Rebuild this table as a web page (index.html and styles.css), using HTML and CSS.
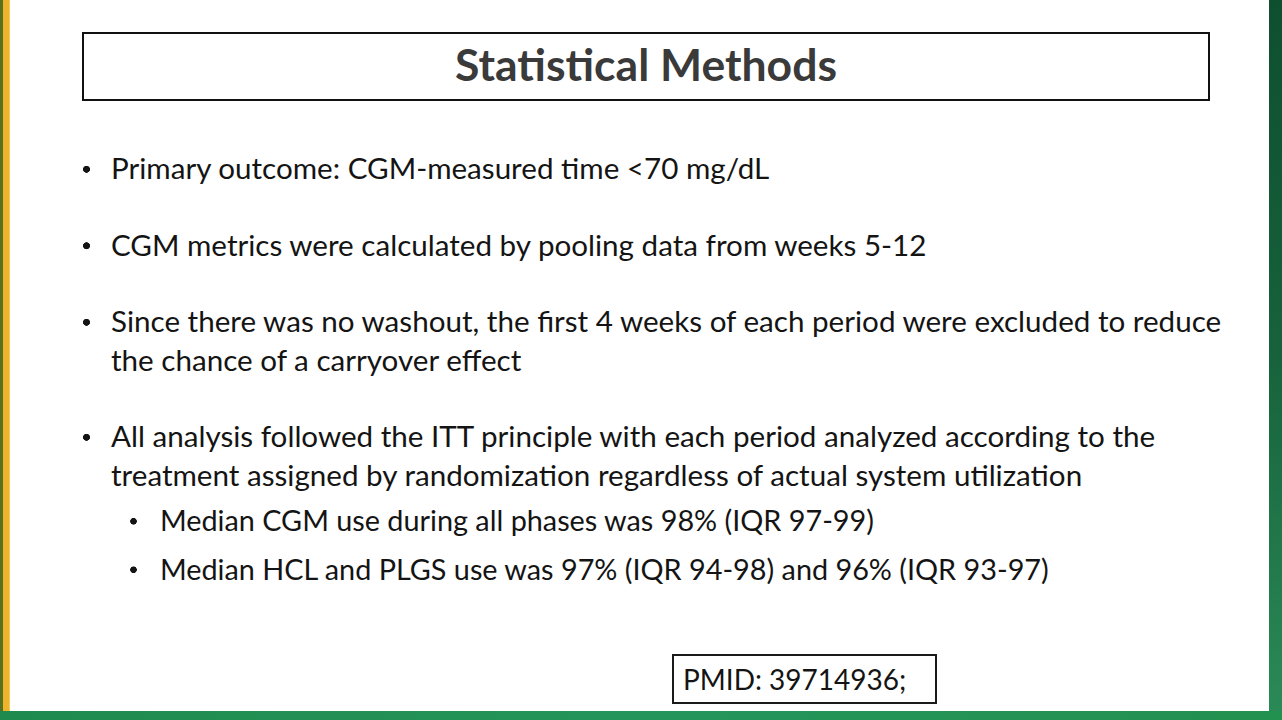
FILE: index.html
```html
<!DOCTYPE html>
<html lang="en">
<head>
<meta charset="utf-8">
<title>Statistical Methods</title>
<link rel="stylesheet" href="styles.css">
</head>
<body>
<div class="slide">
  <div class="stripe-left"></div>
  <main class="content">
    <header class="title-box"><h1 class="title">Statistical Methods</h1></header>
    <ul class="points">
      <li class="pt"><div class="pt-body"><p class="line">Primary outcome: CGM-measured time &lt;70 mg/dL</p></div></li>
      <li class="pt"><div class="pt-body"><p class="line">CGM metrics were calculated by pooling data from weeks 5-12</p></div></li>
      <li class="pt"><div class="pt-body"><p class="line">Since there was no washout, the first 4 weeks of each period were excluded to reduce<br>the chance of a carryover effect</p></div></li>
      <li class="pt"><div class="pt-body"><p class="line">All analysis followed the ITT principle with each period analyzed according to the<br>treatment assigned by randomization regardless of actual system utilization</p>
        <ul class="sub">
          <li class="sub-pt"><span>Median CGM use during all phases was 98% (IQR 97-99)</span></li>
          <li class="sub-pt"><span>Median HCL and PLGS use was 97% (IQR 94-98) and 96% (IQR 93-97)</span></li>
        </ul>
      </div></li>
    </ul>
    <div class="pmid">PMID: 39714936;</div>
  </main>
  <div class="stripe-right"></div>
  <div class="band"></div>
</div>
</body>
</html>
```
FILE: styles.css
```css
html, body {
  margin: 0;
  padding: 0;
  background: #ffffff;
}
.slide {
  width: 1282px;
  height: 720px;
  display: grid;
  grid-template-columns: 10px 1259px 13px;
  grid-template-rows: 711px 9px;
  font-family: Lato, "Open Sans", sans-serif;
  color: #141414;
  overflow: hidden;
}
.stripe-left {
  background: linear-gradient(to right, #56711f 0, #56711f 3px, #efb32a 3px, #f0b42c 9px, #f7dc9a 10px);
}
.content {
  background: #ffffff;
  display: flex;
  flex-direction: column;
  padding-top: 32px;
}
.stripe-right {
  background: linear-gradient(to bottom, #0e4f30 0%, #17623c 50%, #2a8a57 100%);
}
.band {
  grid-column: 1 / 4;
  background: linear-gradient(to right, #1f8a4e, #25955a 50%, #22904f);
}
.title-box {
  margin-left: 72px;
  width: 1124px;
  height: 65px;
  border: 2px solid #111;
  display: flex;
  align-items: center;
  justify-content: center;
}
.title {
  margin: 0;
  font-size: 44.5px;
  font-weight: 700;
  color: #3a3a3a;
  line-height: 1;
  padding-bottom: 4px;
}
.points {
  list-style: none;
  margin: 48px 0 0 72px;
  padding: 0;
  display: flex;
  flex-direction: column;
  gap: 38px;
}
.pt {
  display: flex;
  font-size: 29.6px;
  line-height: 38.5px;
}
.pt::before {
  content: "";
  flex: 0 0 29px;
  height: 38.5px;
  background: radial-gradient(circle at 4.5px 52%, #141414 0, #141414 3.2px, rgba(20,20,20,0) 3.8px);
}
.pt-body {
  flex: 1;
}
.line {
  margin: 0;
}
.sub {
  list-style: none;
  margin: 7px 0 0 18px;
  padding: 0;
  display: flex;
  flex-direction: column;
  gap: 10px;
}
.sub-pt {
  display: flex;
  font-size: 28.8px;
  line-height: 38.5px;
}
.sub-pt::before {
  content: "";
  flex: 0 0 31px;
  height: 38.5px;
  background: radial-gradient(circle at 4.5px 52%, #141414 0, #141414 3px, rgba(20,20,20,0) 3.6px);
}
.pmid {
  margin: auto 0 7px 662px;
  width: 252px;
  height: 46px;
  border: 2px solid #1a1a1a;
  font-size: 28px;
  line-height: 46px;
  padding-left: 9px;
  box-sizing: content-box;
}
```
